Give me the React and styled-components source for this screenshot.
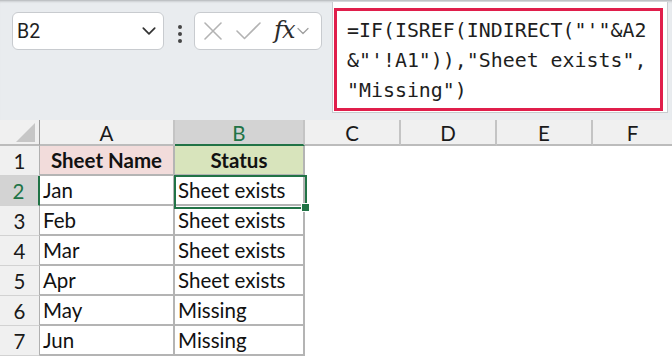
import React from 'react';
import styled, { createGlobalStyle, css } from 'styled-components';

const GlobalStyle = createGlobalStyle`
  html, body {
    margin: 0;
    padding: 0;
    background: #ffffff;
  }
  body {
    font-family: Lato, "Liberation Sans", sans-serif;
    overflow: hidden;
  }
`;

const GREEN = '#217346';
const CELL_FONT = 'Lato, "Liberation Sans", sans-serif';

const Page = styled.div`
  width: 672px;
  height: 357px;
  display: flex;
  flex-direction: column;
  overflow: hidden;
`;

const Toolbar = styled.div`
  height: 120px;
  flex: none;
  background: #e9ecef;
  border-top: 1px solid #bfc2c5;
  box-shadow: inset 0 2px 2px -1px rgba(0, 0, 0, 0.12);
  box-sizing: border-box;
  display: flex;
  align-items: flex-start;
  padding-left: 12px;
`;

const NameBox = styled.div`
  margin-top: 11px;
  width: 152px;
  height: 38px;
  box-sizing: border-box;
  background: #ffffff;
  border: 1px solid #c8cbcf;
  border-radius: 6px;
  display: flex;
  align-items: center;
  justify-content: space-between;
  padding: 0 6px 0 4px;
  font-family: Roboto, "Liberation Sans", sans-serif;
  font-size: 19.5px;
  color: #1f1f1f;
`;

const Dots = styled.div`
  margin: 24px 12px 0 14px;
  display: flex;
  flex-direction: column;
  gap: 3px;

  span {
    width: 4px;
    height: 4px;
    border-radius: 50%;
    background: #454545;
  }
`;

const FxBox = styled.div`
  margin-top: 11px;
  width: 128px;
  height: 38px;
  box-sizing: border-box;
  background: #ffffff;
  border: 1px solid #c8cbcf;
  border-radius: 6px;
  display: flex;
  align-items: center;
  padding-left: 9px;
  gap: 14px;
`;

const FxLabel = styled.span`
  font-family: "DejaVu Serif", "Liberation Serif", serif;
  font-style: italic;
  font-size: 24px;
  color: #2b2b2b;
  margin-left: -1px;
  margin-right: -12px;
  letter-spacing: -1px;
  line-height: 1;
  padding-bottom: 3px;
`;

const FormulaBar = styled.div`
  margin-left: 10px;
  margin-top: 1px;
  width: 336px;
  height: 111px;
  box-sizing: border-box;
  background: #ffffff;
  border: 1px solid #c8cbcf;
  border-top: none;
  padding: 6px 0 0 1px;
`;

const Highlight = styled.div`
  width: 329px;
  height: 103px;
  box-sizing: border-box;
  border: 3px solid #e01e4b;
  padding: 5px 0 0 10px;
  font-family: "DejaVu Sans Mono", "Liberation Mono", monospace;
  font-size: 19.9px;
  line-height: 30px;
  color: #1e1e1e;
  white-space: pre;
`;

const Sheet = styled.div`
  position: relative;
  flex: 1;
  display: grid;
  grid-template-columns: 40px 135px 130px 96px 96px 96px 1fr;
  grid-template-rows: 26px repeat(7, 30px);
  font-family: ${CELL_FONT};
  font-size: 20.5px;
  color: #111;
`;

const Corner = styled.div`
  position: relative;
  background: #f0f0f0;
  border-right: 1px solid #9c9c9c;
  border-bottom: 2px solid #bcbcbc;
  box-sizing: border-box;

  &::after {
    content: '';
    position: absolute;
    right: 4px;
    bottom: 2px;
    width: 19px;
    height: 19px;
    background: #c6c6c6;
    clip-path: polygon(100% 0, 100% 100%, 0 100%);
  }
`;

const ColHead = styled.div`
  background: ${(p) => (p.$active ? '#d3d3d3' : '#f0f0f0')};
  color: ${(p) => (p.$active ? GREEN : '#1a1a1a')};
  border-right: ${(p) => (p.$last ? 'none' : '2px solid #c4c4c4')};
  border-bottom: 2px solid ${(p) => (p.$active ? GREEN : '#bcbcbc')};
  box-sizing: border-box;
  display: flex;
  align-items: center;
  justify-content: center;
  padding-top: 1px;
`;

const RowHead = styled.div`
  background: ${(p) => (p.$active ? '#d3d3d3' : '#f0f0f0')};
  color: ${(p) => (p.$active ? GREEN : '#1a1a1a')};
  border-right: ${(p) => (p.$active ? `2px solid ${GREEN}` : '1px solid #b0b0b0')};
  border-bottom: 1px solid #d2d2d2;
  box-sizing: border-box;
  display: flex;
  align-items: center;
  justify-content: center;
  padding-right: ${(p) => (p.$active ? '1px' : '0')};
`;

const Cell = styled.div`
  box-sizing: border-box;
  display: flex;
  align-items: center;
  padding: 0 0 0 3px;
  white-space: nowrap;
  ${(p) =>
    p.$boxed &&
    css`
      border-right: 2px solid #b4b4b4;
      border-bottom: 2px solid #b4b4b4;
    `}
  ${(p) =>
    p.$fill &&
    css`
      background: ${p.$fill};
    `}
  ${(p) =>
    p.$head &&
    css`
      font-weight: 700;
      justify-content: center;
      padding-left: 0;
    `}
`;

const Selection = styled.div`
  position: absolute;
  left: 174px;
  top: 55px;
  width: 133px;
  height: 34px;
  box-sizing: border-box;
  border: 2px solid ${GREEN};
  pointer-events: none;

  &::after {
    content: '';
    position: absolute;
    right: -5px;
    bottom: -5px;
    width: 7px;
    height: 7px;
    background: ${GREEN};
    border: 1px solid #ffffff;
  }
`;

const Chevron = ({ size = 14, color = '#333', width = 1.6 }) => (
  <svg width={size} height={size} viewBox="0 0 14 14" fill="none">
    <path d="M2 4.5 L7 9.5 L12 4.5" stroke={color} strokeWidth={width} strokeLinecap="round" strokeLinejoin="round" />
  </svg>
);

const CrossIcon = () => (
  <svg width="18" height="18" viewBox="0 0 18 18" fill="none">
    <path d="M1 1 L17 17 M17 1 L1 17" stroke="#b3b3b3" strokeWidth="1.6" strokeLinecap="round" />
  </svg>
);

const CheckIcon = () => (
  <svg width="25" height="18" viewBox="0 0 25 18" fill="none">
    <path d="M1 9 L8.5 16.5 L24 1" stroke="#b3b3b3" strokeWidth="1.6" strokeLinecap="round" strokeLinejoin="round" />
  </svg>
);

const columns = ['A', 'B', 'C', 'D', 'E', 'F'];
const rows = [
  ['Jan', 'Sheet exists'],
  ['Feb', 'Sheet exists'],
  ['Mar', 'Sheet exists'],
  ['Apr', 'Sheet exists'],
  ['May', 'Missing'],
  ['Jun', 'Missing'],
];
const emptyCols = ['C', 'D', 'E', 'F'];

const formula = [`=IF(ISREF(INDIRECT("'"&A2`, `&"'!A1")),"Sheet exists",`, `"Missing")`];

export default function App() {
  return (
    <Page>
      <GlobalStyle />
      <Toolbar>
        <NameBox>
          <span>B2</span>
          <Chevron size={16} color="#333" width={1.5} />
        </NameBox>
        <Dots>
          <span />
          <span />
          <span />
        </Dots>
        <FxBox>
          <CrossIcon />
          <CheckIcon />
          <FxLabel>fx</FxLabel>
          <Chevron size={14} color="#a0a0a0" width={1.3} />
        </FxBox>
        <FormulaBar>
          <Highlight>{formula.join('\n')}</Highlight>
        </FormulaBar>
      </Toolbar>

      <Sheet>
        <Corner />
        {columns.map((c) => (
          <ColHead key={c} $active={c === 'B'} $last={c === 'F'}>
            {c}
          </ColHead>
        ))}

        <RowHead>1</RowHead>
        <Cell $boxed $head $fill="#f2dcdb">Sheet Name</Cell>
        <Cell $boxed $head $fill="#d8e4bc">Status</Cell>
        {emptyCols.map((c) => (
          <Cell key={c} />
        ))}

        {rows.map(([name, status], i) => (
          <React.Fragment key={name}>
            <RowHead $active={i === 0}>{i + 2}</RowHead>
            <Cell $boxed>{name}</Cell>
            <Cell $boxed>{status}</Cell>
            {emptyCols.map((c) => (
              <Cell key={c} />
            ))}
          </React.Fragment>
        ))}
        <Selection />
      </Sheet>
    </Page>
  );
}
